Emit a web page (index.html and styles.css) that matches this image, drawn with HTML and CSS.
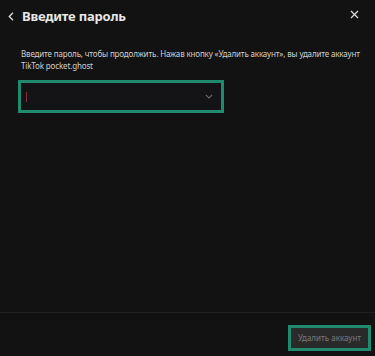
FILE: index.html
```html
<!DOCTYPE html>
<html lang="ru">
<head>
    <meta charset="UTF-8">
    <meta name="viewport" content="width=device-width, initial-scale=1.0">
    <title>Введите пароль</title>
    <link rel="stylesheet" href="styles.css">
</head>
<body>
    <div class="dialog">
        <div class="header">
            <button class="icon-btn back" aria-label="Назад">
                <svg width="6" height="9" viewBox="0 0 6 9"><path d="M5 0.8 L1.3 4.5 L5 8.2" fill="none" stroke="#d8d8d8" stroke-width="1.4"/></svg>
            </button>
            <h1>Введите пароль</h1>
            <button class="icon-btn close" aria-label="Закрыть">
                <svg width="9" height="9" viewBox="0 0 9 9"><path d="M1 1 L8 8 M8 1 L1 8" fill="none" stroke="#d8d8d8" stroke-width="1.3"/></svg>
            </button>
        </div>
        <div class="content">
            <p class="hint">Введите пароль, чтобы продолжить. Нажав кнопку «Удалить аккаунт», вы удалите аккаунт TikTok pocket.ghost</p>
            <div class="field">
                <span class="caret"></span>
                <svg class="chevron" width="8" height="5" viewBox="0 0 8 5"><path d="M0.8 0.8 L4 4 L7.2 0.8" fill="none" stroke="#6a6a6a" stroke-width="1.1"/></svg>
            </div>
        </div>
        <div class="footer">
            <button class="delete-btn">Удалить аккаунт</button>
        </div>
    </div>
</body>
</html>
```

FILE: styles.css
```css
html, body {
    margin: 0;
    padding: 0;
    background: #121212;
}
body {
    font-family: "Noto Sans", "Open Sans", sans-serif;
    color: #e0e0e0;
}
.dialog {
    width: 375px;
    height: 356px;
    display: flex;
    flex-direction: column;
}
.header {
    height: 32px;
    display: flex;
    align-items: center;
    padding: 0 8px 0 8px;
}
.icon-btn {
    background: none;
    border: none;
    padding: 0;
    display: flex;
    align-items: center;
    cursor: pointer;
}
.back {
    width: 14px;
}
.header h1 {
    margin: 0;
    flex: 1;
    font-size: 13px;
    font-weight: bold;
    color: #e6e6e6;
    letter-spacing: -0.2px;
}
.close {
    margin-right: 8px;
    margin-top: -4px;
}
.content {
    flex: 1;
    padding: 16px 8px 0 21px;
}
.hint {
    margin: 0;
    font-size: 8px;
    line-height: 12px;
    letter-spacing: -0.15px;
    color: #cfcfcf;
}
.field {
    margin-top: 8px;
    margin-left: -3px;
    width: 185px;
    height: 27px;
    border: 3px solid #1f8a6d;
    background: #141416;
    display: flex;
    align-items: center;
    justify-content: space-between;
    padding: 0 10px 0 5px;
    box-sizing: content-box;
}
.caret {
    width: 1px;
    height: 10px;
    background: #8a2a3a;
}
.chevron {
    margin-right: -2px;
}
.footer {
    border-top: 1px solid #1f1f1f;
    height: 43px;
    display: flex;
    align-items: center;
    justify-content: flex-end;
    padding: 0 4px 0 0;
}
.delete-btn {
    margin-top: 6px;
    width: 83px;
    height: 26px;
    border: 3px solid #1f8a6d;
    background: #2a2a2a;
    color: #7a7a7a;
    font-family: "Noto Sans", "Open Sans", sans-serif;
    font-size: 8px;
    padding: 0;
}
```
